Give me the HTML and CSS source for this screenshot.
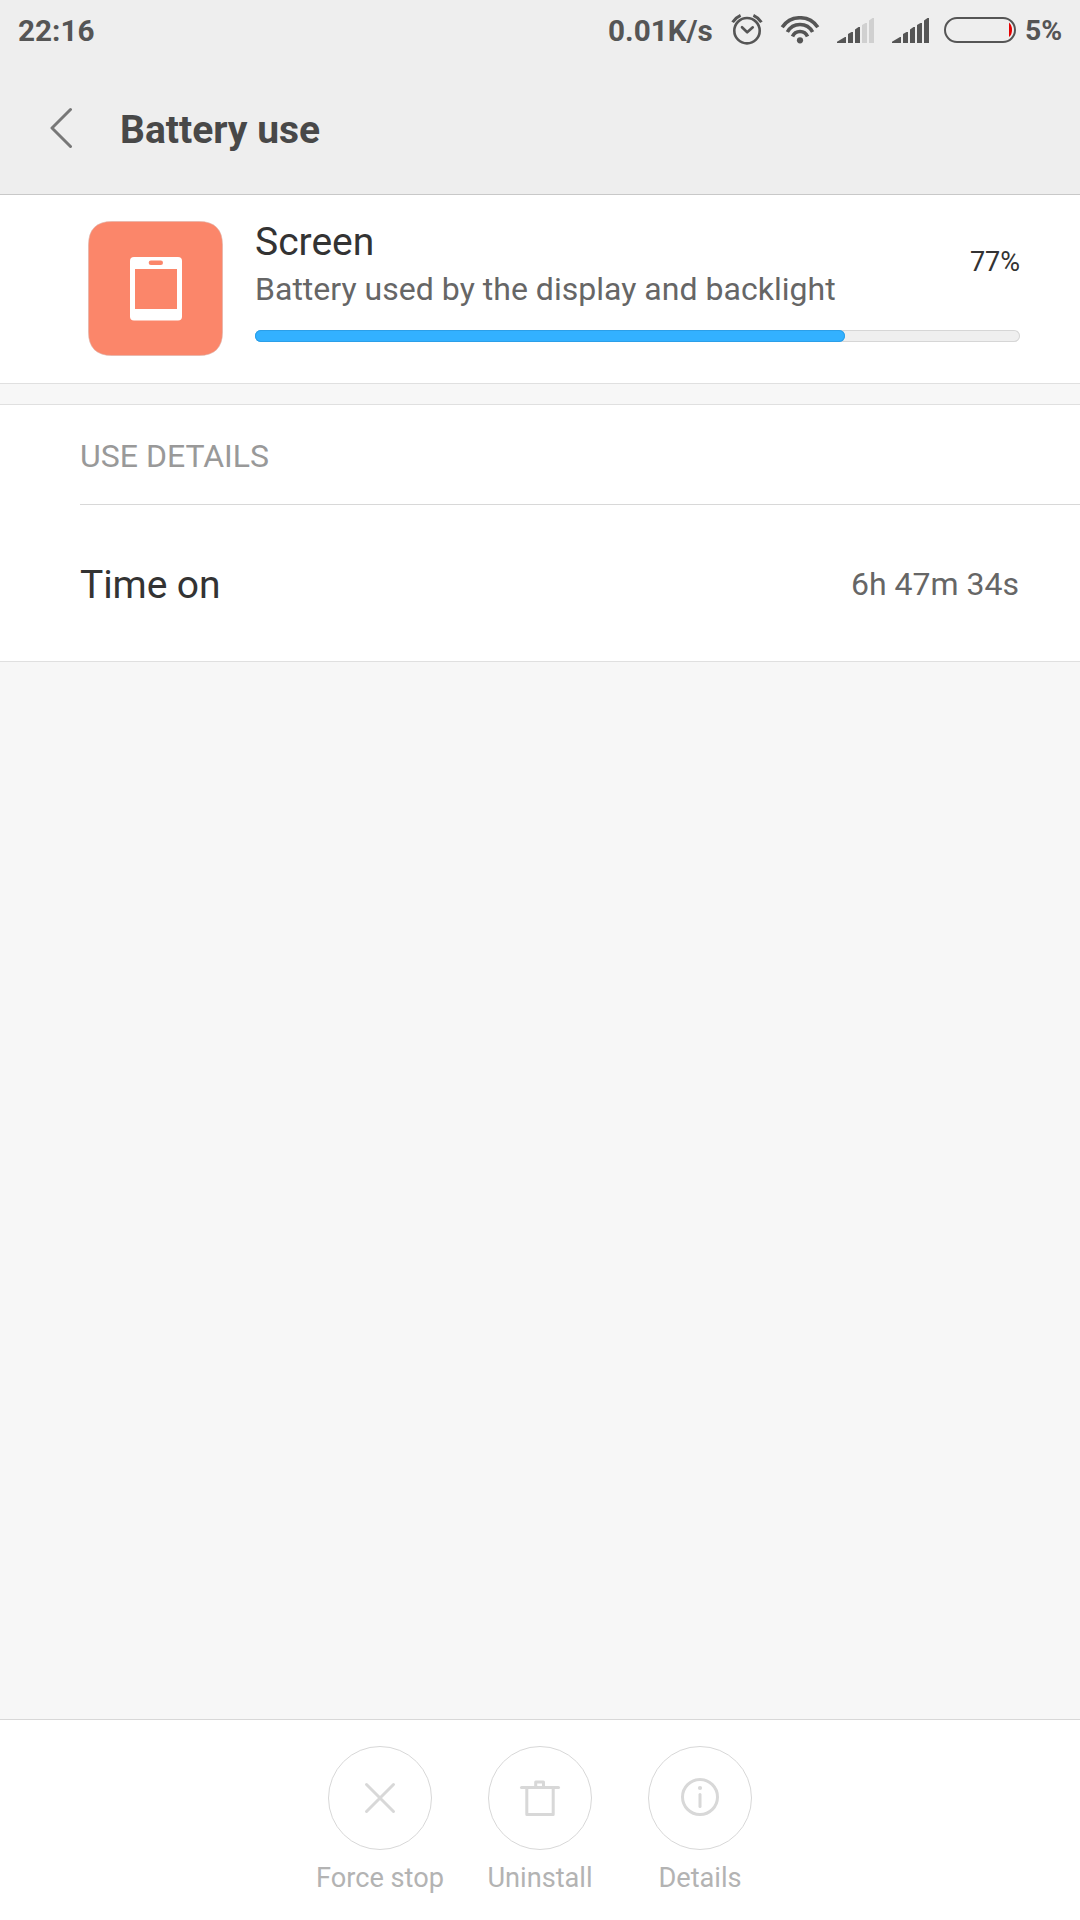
FILE: index.html
```html
<!DOCTYPE html>
<html lang="en">
<head>
<meta charset="utf-8">
<title>Battery use</title>
<link rel="stylesheet" href="styles.css">
</head>
<body>
<div class="screen">
  <header class="header">
    <div class="status">
      <span class="clock">22:16</span>
      <span class="speed">0.01K/s</span>
      <svg class="alarm" width="32" height="32" viewBox="0 0 32 32" fill="none" stroke="#555" stroke-width="2.6">
        <circle cx="16" cy="16.700" r="12.700"/>
        <path d="M11 13.200L16.200 18.300L21.800 13.300" stroke-linecap="round" stroke-linejoin="round"/>
        <path d="M1.600 8.200Q4.600 3.600 9.600 1.400M22.400 1.400Q27.400 3.600 30.400 8.200" stroke-width="3"/>
      </svg>
      <svg class="wifi" width="40" height="28" viewBox="0 0 40 28" fill="none" stroke="#555" stroke-width="3.600">
        <path d="M2.200 11.200A21.500 21.500 0 0 1 37.800 11.200"/>
        <path d="M7.400 16A14.300 14.300 0 0 1 32.600 16"/>
        <path d="M12.500 20.500A8.100 8.100 0 0 1 27.500 20.500"/>
        <circle cx="20" cy="24.300" r="3.100" fill="#555" stroke="none"/>
      </svg>
      <svg class="signal" width="38" height="26" viewBox="0 0 38 26" fill="#555">
        <path d="M0 25V23.800L8 19H9V25ZM11 25V16L14.500 14H16V25ZM18 25V11.500L21.500 9H23V25Z"/>
        <path fill="#d0d0d0" d="M25 25V7L28.500 5H30V25ZM32 25V2.500L35.500 0H37V25Z"/>
      </svg>
      <svg class="signal" width="38" height="26" viewBox="0 0 38 26" fill="#555">
        <path d="M0 25V23.800L8 19H9V25ZM11 25V16L14.500 14H16V25ZM18 25V11.500L21.500 9H23V25ZM25 25V7L28.500 5H30V25ZM32 25V2.500L35.500 0H37V25Z"/>
      </svg>
      <svg class="battery" width="72" height="26" viewBox="0 0 72 26">
        <rect x="1" y="1" width="70" height="24" rx="12" fill="none" stroke="#555" stroke-width="2"/>
        <path d="M65 5.500Q68 8 68 13T65 20Z" fill="#e60000"/>
      </svg>
      <span class="charge">5%</span>
    </div>
    <div class="titlebar">
      <svg class="back" width="24" height="42" viewBox="0 0 24 42" fill="none" stroke="#777" stroke-width="3" stroke-linecap="round" stroke-linejoin="round"><path d="M20.500 2.500L2 21L20.500 39.500"/></svg>
      <h1 class="title">Battery use</h1>
    </div>
  </header>

  <section class="usage">
    <svg class="app-icon" width="136" height="136" viewBox="0 0 136 136">
      <path d="M25 1.500H112Q135.500 1.500 135.500 25V112Q135.500 135.500 112 135.500H25Q1.500 135.500 1.500 112V25Q1.500 1.500 25 1.500Z" fill="#fb866a" stroke="#ddb0a6" stroke-width=".6"/>
      <rect x="43" y="37" width="52" height="63.500" rx="4" fill="#fff"/>
      <rect x="48" y="49" width="42" height="40" fill="#fb866a"/>
      <rect x="61.700" y="40.500" width="14.300" height="4.500" rx="2.200" fill="#fb866a"/>
    </svg>
    <div class="usage-body">
      <div class="usage-row">
        <div class="usage-text">
          <h2 class="name">Screen</h2>
          <p class="summary">Battery used by the display and backlight</p>
        </div>
        <span class="percent">77%</span>
      </div>
      <div class="track"><div class="fill"></div></div>
    </div>
  </section>

  <section class="details">
    <h3 class="section-title">USE DETAILS</h3>
    <div class="detail-row">
      <span class="label">Time on</span>
      <span class="value">6h 47m 34s</span>
    </div>
  </section>

  <footer class="actions">
    <div class="action">
      <span class="ring"><svg width="44" height="44" viewBox="0 0 44 44" fill="none" stroke="#d8d8d8" stroke-width="3" stroke-linecap="round"><path d="M8.500 8.500L35.500 35.500M35.500 8.500L8.500 35.500"/></svg></span>
      <span class="caption">Force stop</span>
    </div>
    <div class="action">
      <span class="ring"><svg width="44" height="44" viewBox="0 0 44 44" fill="none" stroke="#d8d8d8" stroke-width="3"><path d="M3.500 11.500H40.500" stroke-linecap="round"/><path d="M8.800 11.500V38.500H35.200V11.500M17.700 11.500V6H25.500V11.500" stroke-linejoin="round"/></svg></span>
      <span class="caption">Uninstall</span>
    </div>
    <div class="action">
      <span class="ring"><svg width="44" height="44" viewBox="0 0 44 44" fill="none" stroke="#d8d8d8" stroke-width="3" stroke-linecap="round"><circle cx="22" cy="21" r="17.500"/><path d="M22 18.500V30.500"/><circle cx="22" cy="12" r="2.100" fill="#d8d8d8" stroke="none"/></svg></span>
      <span class="caption">Details</span>
    </div>
  </footer>
</div>
</body>
</html>
```
FILE: styles.css
```css
* { box-sizing: border-box; margin: 0; padding: 0; }

body {
  background: #f7f7f7;
  font-family: Roboto, "Liberation Sans", sans-serif;
  color: #333;
}

svg { display: block; flex: none; }

.screen {
  width: 1080px;
  height: 1920px;
  display: flex;
  flex-direction: column;
}

.header {
  height: 195px;
  background: #eee;
  border-bottom: 1px solid #c8c8c8;
}

.status {
  height: 60px;
  padding-left: 18px;
  display: flex;
  align-items: center;
  color: #555;
  font-size: 29.700px;
  font-weight: 700;
  line-height: 60px;
}

.status span { padding-top: 2px; }
.clock { width: 590px; }
.speed { width: 123px; white-space: nowrap; }
.wifi { margin-left: 17px; }
.signal { margin-left: 17px; margin-top: 2px; }
.battery { margin-left: 14px; }
.charge { margin-left: 9px; font-size: 28.300px; }

.titlebar {
  height: 134px;
  padding: 5px 0 0 50px;
  display: flex;
  align-items: center;
}

.back { margin-bottom: 3px; }

.title {
  margin-left: 46px;
  color: #484848;
  font-size: 39px;
  font-weight: 700;
  line-height: 48px;
}

.usage {
  height: 189px;
  padding: 25px 60px 0 87px;
  display: flex;
  background: #fff;
  border-bottom: 1px solid #e0e0e0;
}

.usage-body { flex: 1; margin-left: 32px; }

.usage-row {
  height: 110px;
  display: flex;
  justify-content: space-between;
}

.name { font-size: 39px; font-weight: 400; line-height: 44px; }
.summary { margin-top: 3px; color: #666; font-size: 32px; letter-spacing: 0.02px; line-height: 44px; white-space: nowrap; }
.percent { padding-top: 26px; font-size: 27px; line-height: 32px; }

.track {
  height: 12px;
  background: #efefef;
  border-radius: 6px;
  box-shadow: inset 0 0 0 1px #d6d6d6;
}

.fill {
  width: 590px;
  height: 12px;
  background: #33b1ff;
  border-radius: 6px;
  box-shadow: inset 0 0 0 1px #2c9fe8;
}

.details {
  height: 258px;
  margin-top: 20px;
  padding-left: 80px;
  background: #fff;
  border-top: 1px solid #e0e0e0;
  border-bottom: 1px solid #e0e0e0;
}

.section-title {
  height: 100px;
  border-bottom: 1px solid #d8d8d8;
  color: #999;
  font-size: 32px;
  font-weight: 400;
  line-height: 103px;
}

.detail-row {
  height: 156px;
  padding: 3px 61px 0 0;
  display: flex;
  align-items: center;
  justify-content: space-between;
}

.label { font-size: 39px; letter-spacing: -0.1px; }
.value { margin-bottom: 1px; color: #666; font-size: 32px; }

.actions {
  height: 201px;
  margin-top: auto;
  padding-top: 26px;
  display: flex;
  justify-content: center;
  background: #fff;
  border-top: 1px solid #d8d8d8;
}

.action {
  width: 160px;
  display: flex;
  flex-direction: column;
  align-items: center;
}

.ring {
  width: 104px;
  height: 104px;
  display: flex;
  align-items: center;
  justify-content: center;
  border: 1px solid #d8d8d8;
  border-radius: 50%;
}

.caption {
  margin-top: 12px;
  color: #b3b3b3;
  font-size: 27.200px;
  line-height: 32px;
  white-space: nowrap;
}
```
